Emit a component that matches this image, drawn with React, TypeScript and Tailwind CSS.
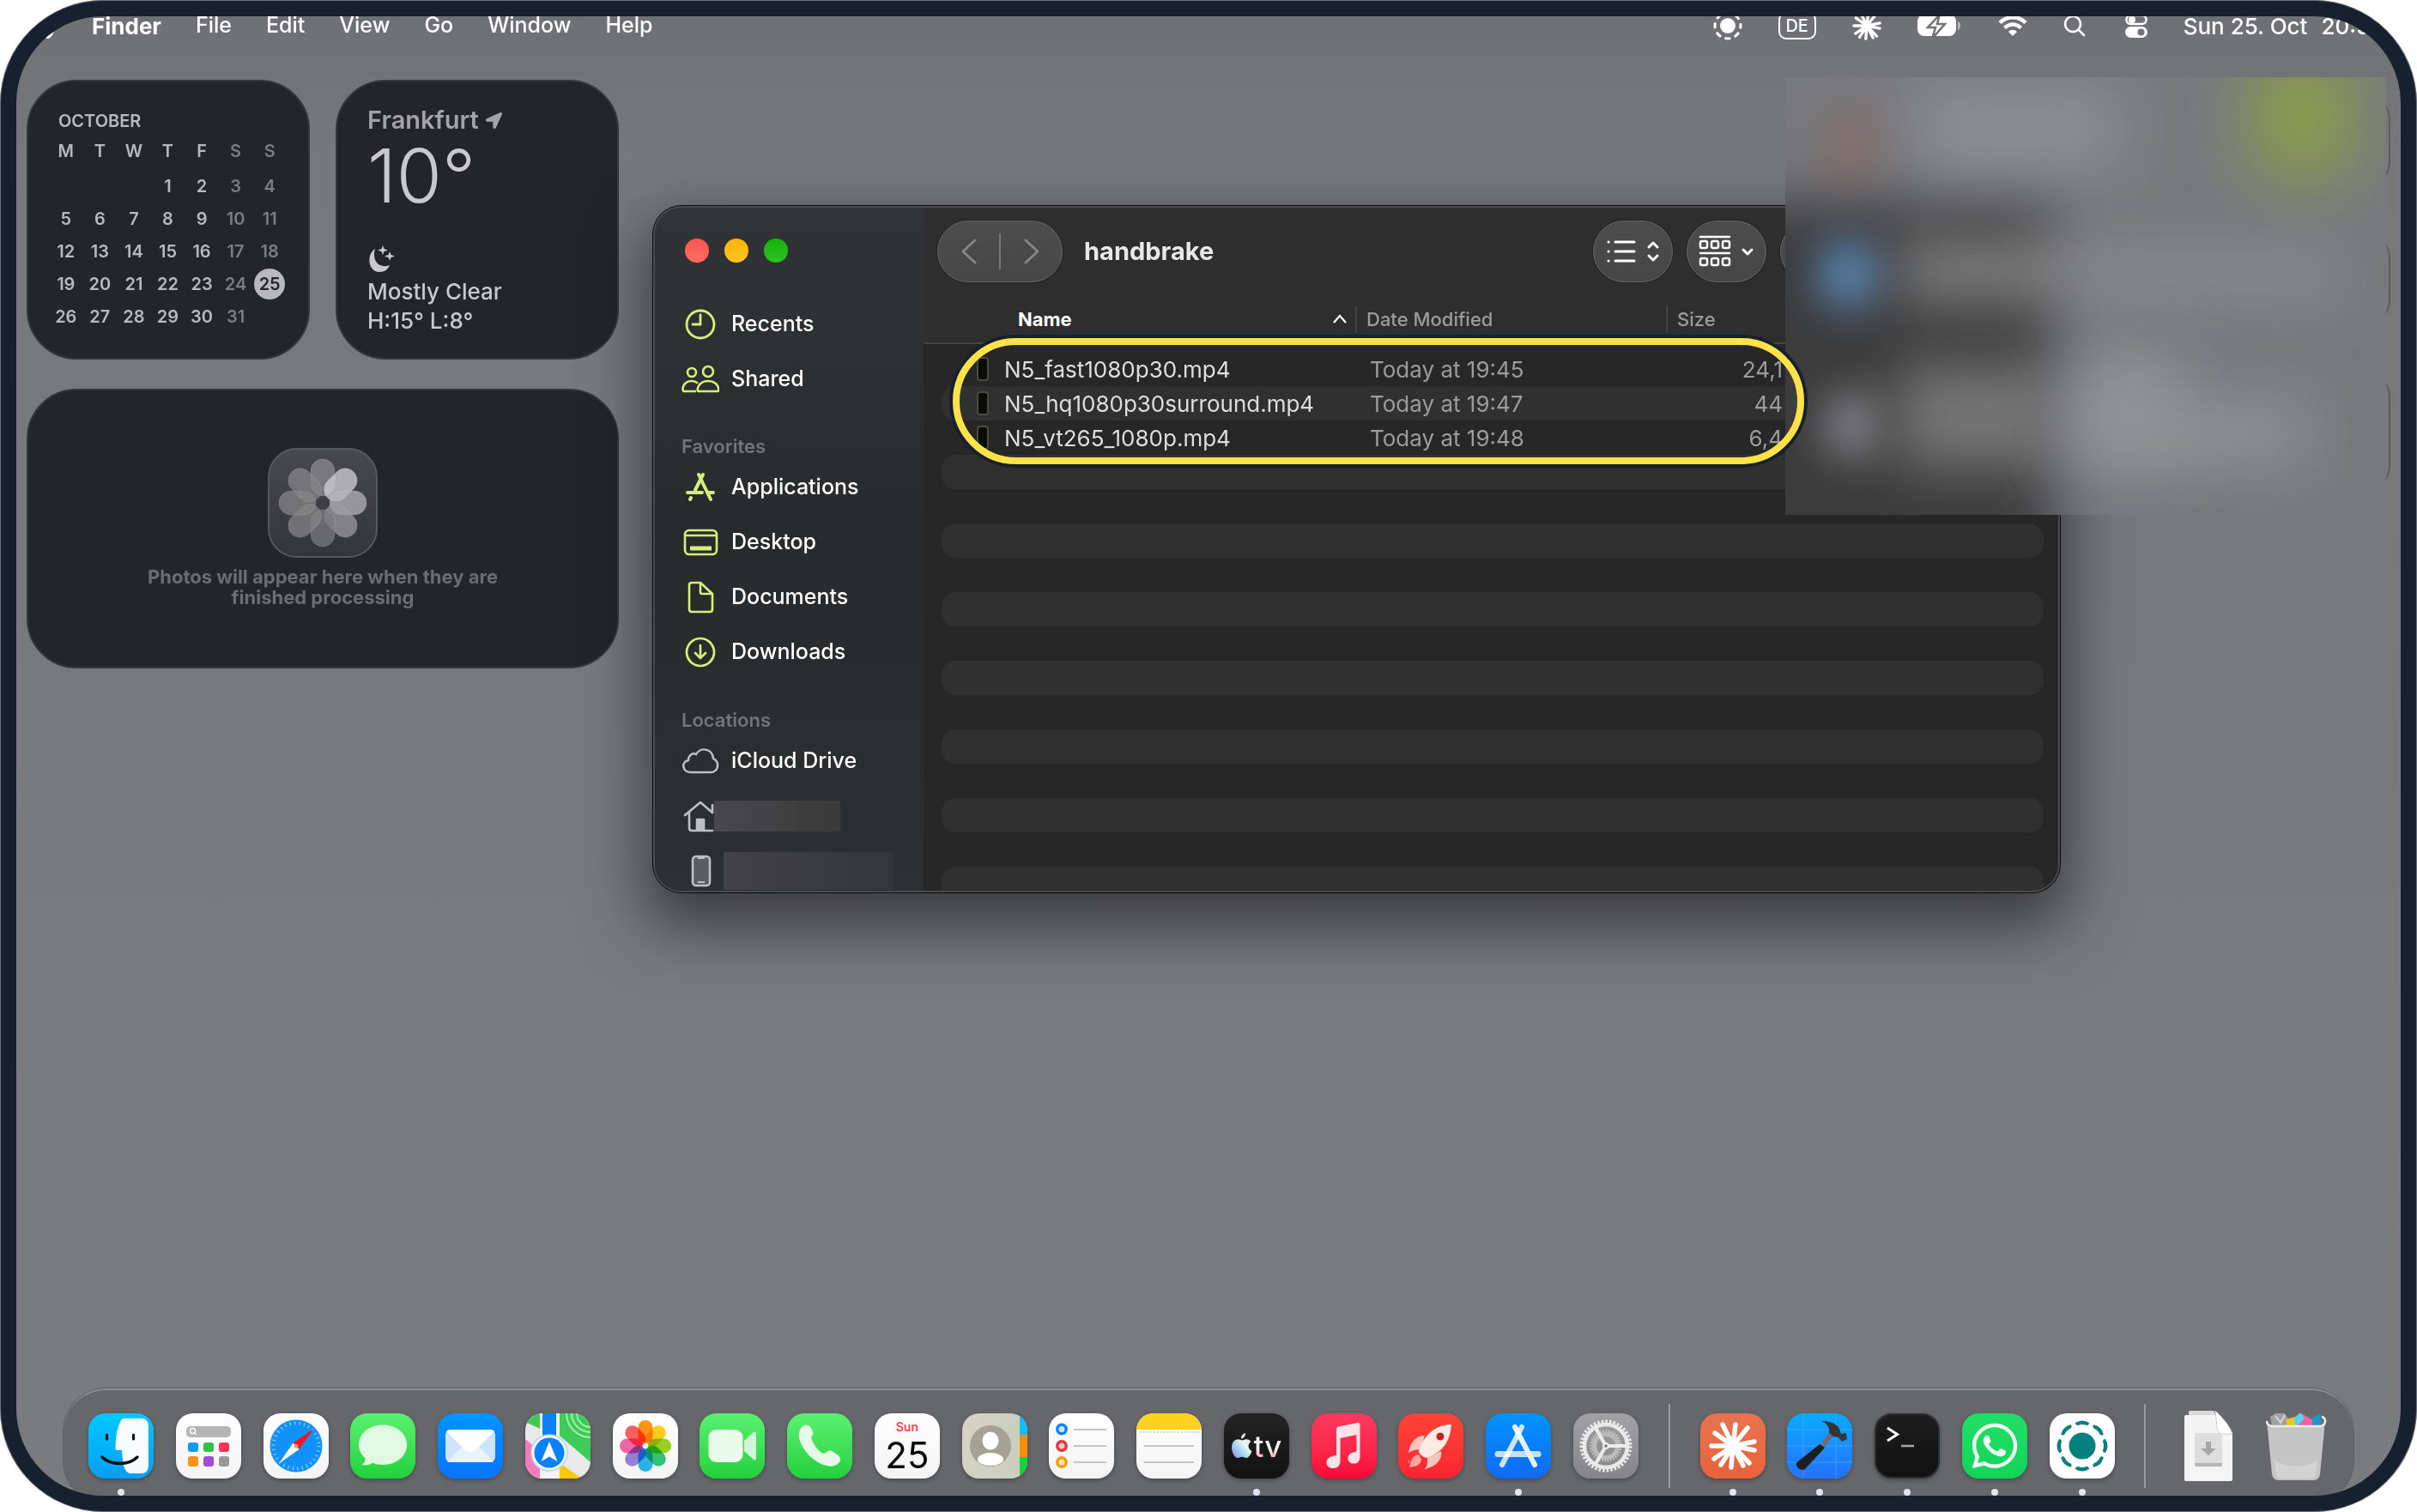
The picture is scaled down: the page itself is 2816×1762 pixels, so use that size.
import React from 'react';
import { FaApple, FaWhatsapp, FaLocationArrow } from 'react-icons/fa';

const menus = ['File', 'Edit', 'View', 'Go', 'Window', 'Help'];

const spin = (count: number) => Array.from({ length: count }, (_, i) => (360 / count) * i);

const Burst = ({ className }: { className: string }) => (
  <svg viewBox="0 0 76 76" className={className} stroke="currentColor" strokeWidth="5.5" strokeLinecap="round">
    <path d="M38 38 26 13M38 38 41 13M38 38 55 17M38 38 63 33M38 38 63 43M38 38 57 58M38 38 50 61M38 38 36 63M38 38 24 60M38 38 16 53M38 38 13 38M38 38 17 23" />
  </svg>
);

const MenuBar = () => (
  <header className="flex h-[60px] items-center justify-between pr-[44px] pl-[34px] text-[25px] text-white">
    <nav className="flex items-center gap-[40px]">
      <button aria-label="Apple menu">
        <FaApple className="size-[33px]" />
      </button>
      <button className="text-[26px] font-bold">Finder</button>
      {menus.map((menu) => (
        <button key={menu} className="font-medium">{menu}</button>
      ))}
    </nav>
    <div className="flex items-center gap-[42px] text-[26px] font-medium">
      <svg viewBox="0 0 34 34" className="size-[34px]" fill="none" stroke="white" strokeWidth="3">
        <circle cx="17" cy="17" r="9" fill="white" stroke="none" />
        <circle cx="17" cy="17" r="15" strokeDasharray="7 4.78" strokeDashoffset="3.5" />
      </svg>
      <span className="flex h-[32px] w-[44px] items-center justify-center rounded-[9px] border-2 border-white text-[20px]">DE</span>
      <Burst className="size-[46px] -mx-[6px]" />
      <svg viewBox="0 0 52 28" className="h-[28px] w-[52px]">
        <rect x="0" y="1" width="45" height="25" rx="8" fill="white" />
        <path d="M47 9c4 1 4 9 0 10z" fill="white" opacity=".5" />
        <path d="M27 0 12 16h9l-4 13 15-17h-9l3-12z" fill="white" stroke="#717276" strokeWidth="2.500" />
      </svg>
      <svg viewBox="0 0 34 26" className="h-[26px] w-[34px]" fill="none" stroke="white" strokeWidth="4.5">
        <path d="M2 9.500C10 1 24 1 32 9.500M7.500 15.500c5.500-5.500 13.500-5.500 19 0" />
        <path d="M12 20c3-3 7-3 10 0l-5 5z" fill="white" stroke="none" />
      </svg>
      <svg viewBox="0 0 26 26" className="mr-[4px] size-[26px]" fill="none" stroke="white" strokeWidth="2.6" strokeLinecap="round">
        <circle cx="11" cy="11" r="9" />
        <path d="m18 18 6 6" />
      </svg>
      <svg viewBox="0 0 26 28" className="h-[28px] w-[26px]">
        <rect x="1.500" y="2" width="23" height="10" rx="5" fill="none" stroke="white" strokeWidth="2.500" />
        <circle cx="8" cy="7" r="4" fill="white" />
        <rect x="0" y="15" width="26" height="13" rx="6.500" fill="white" />
        <circle cx="18.500" cy="21.500" r="4" fill="#717276" />
      </svg>
      <time className="flex gap-[16px]">
        <span>Sun 25. Oct</span>
        <span>20:51</span>
      </time>
    </div>
  </header>
);

const weeks = [
  ['', '', '', '1', '2', '3', '4'],
  ['5', '6', '7', '8', '9', '10', '11'],
  ['12', '13', '14', '15', '16', '17', '18'],
  ['19', '20', '21', '22', '23', '24', '25'],
  ['26', '27', '28', '29', '30', '31', ''],
];

const CalendarWidget = () => (
  <section className="h-[326px] rounded-[58px] border-2 border-[#36373a] bg-[#242529] pt-[33px] pr-[25px] pl-[24px] text-[20px] font-semibold text-[#b9b9bc]">
    <h2 className="pl-[11px] leading-[26px]">OCTOBER</h2>
    <table className="w-full table-fixed text-center">
      <thead>
        <tr className="h-[44px]">
          {['M', 'T', 'W', 'T', 'F', 'S', 'S'].map((d, i) => (
            <th key={i} className={i > 4 ? 'font-semibold text-[#7d7d80]' : 'font-semibold'}>{d}</th>
          ))}
        </tr>
      </thead>
      <tbody>
        {weeks.map((week, w) => (
          <tr key={w} className="h-[38px]">
            {week.map((day, i) => (
              <td key={i} className={i > 4 ? 'p-0 text-[#7d7d80]' : 'p-0'}>
                {day === '25' ? (
                  <span className="mx-auto flex size-[36px] items-center justify-center rounded-full bg-[#b9b9bb] text-[#242529]">25</span>
                ) : (
                  day
                )}
              </td>
            ))}
          </tr>
        ))}
      </tbody>
    </table>
  </section>
);

const WeatherWidget = () => (
  <section className="flex h-[326px] flex-col rounded-[58px] border-2 border-[#36373a] bg-[#242529] pt-[28px] pl-[35px] text-[#c9c9cb]">
    <h2 className="flex items-center gap-[8px] text-[29px] leading-[34px] font-semibold text-[#a3a3a6]">
      Frankfurt <FaLocationArrow className="size-[19px]" />
    </h2>
    <p className="text-[86px] leading-[97px] font-light">10°</p>
    <svg viewBox="0 0 32 32" className="mt-[32px] size-[32px]" fill="currentColor">
      <path d="M9 4C-1 10 0 30 14 31c6 0 10-3 12-8C13 28 5 17 9 4z" />
      <path d="m18 0 1.500 4L24 5.500 19.500 7 18 11l-1.500-4L12 5.500 16.500 4zM26 7l1.500 4 4.500 1.500-4.500 1.500L26 18l-1.500-4-4.500-1.500 4.500-1.500z" />
    </svg>
    <p className="mt-[5px] text-[26px] leading-[34px] font-medium">Mostly Clear</p>
    <p className="text-[26px] leading-[34px] font-medium">H:15° L:8°</p>
  </section>
);

const grayPetals = ['#8b8b8d', '#d2d2d4', '#b4b4b6', '#9b9b9d', '#7a7a7c', '#858587', '#858587', '#858587'];

const PhotosWidget = () => (
  <section className="col-span-2 flex h-[326px] flex-col items-center rounded-[58px] border-2 border-[#36373a] bg-[#242529] pt-[67px]">
    <div className="flex size-[128px] items-center justify-center rounded-[34px] border-2 border-[#58595c] bg-linear-to-b from-[#48494b] to-[#343538]">
      <svg viewBox="0 0 104 104" className="size-[104px]">
        {grayPetals.map((color, i) => (
          <rect key={i} x="38" y="1" width="28" height="43" rx="14" fill={color} fillOpacity=".75" stroke="#ffffff" strokeOpacity=".12" transform={`rotate(${i * 45} 52 52)`} />
        ))}
      </svg>
    </div>
    <p className="mt-[10px] w-[440px] text-center text-[22px] leading-[24px] font-bold text-[#6c6d70]">
      Photos will appear here when they are finished processing
    </p>
  </section>
);

const Clock = () => (
  <svg viewBox="0 0 44 40" className="h-[40px] w-[44px]" fill="none" stroke="currentColor" strokeWidth="2.800">
    <circle cx="22" cy="20" r="16" />
    <path d="M22 9v11h-9" strokeLinecap="round" />
  </svg>
);

const People = () => (
  <svg viewBox="0 0 44 40" className="h-[40px] w-[44px]" fill="none" stroke="currentColor" strokeWidth="2.600">
    <circle cx="12" cy="12" r="5" />
    <circle cx="31" cy="11" r="6" />
    <path d="M17 34H3c-3 0-2-12 9-12 3 0 5 1 7 2.500M20 34c-3 0-1-12 11-12s14 12 11 12z" />
  </svg>
);

const Apps = () => (
  <svg viewBox="0 0 44 40" className="h-[40px] w-[44px]" fill="none" stroke="currentColor" strokeWidth="4" strokeLinecap="round">
    <path d="m25 5-9 18M20 5l14 29M7 26h17M32 26h5M11 32l-1 2" />
  </svg>
);

const Desktop = () => (
  <svg viewBox="0 0 44 40" className="h-[40px] w-[44px]" fill="none" stroke="currentColor" strokeWidth="2.600">
    <rect x="4" y="6" width="37" height="28" rx="5" />
    <path d="M4 12h37" />
    <path d="M10 27h25" strokeWidth="5" />
  </svg>
);

const Doc = () => (
  <svg viewBox="0 0 44 40" className="h-[40px] w-[44px]" fill="none" stroke="currentColor" strokeWidth="2.600" strokeLinejoin="round">
    <path d="M12 3h10l14 13v18q0 3-3 3H12q-3 0-3-3V6q0-3 3-3z" />
    <path d="M22 3v11q0 2 2 2h11" />
  </svg>
);

const Download = () => (
  <svg viewBox="0 0 44 40" className="h-[40px] w-[44px]" fill="none" stroke="currentColor" strokeWidth="2.700" strokeLinecap="round" strokeLinejoin="round">
    <circle cx="22" cy="20" r="16" />
    <path d="M22 12v15m-6-6 6 6 6-6" />
  </svg>
);

const Cloud = () => (
  <svg viewBox="0 0 44 40" className="h-[40px] w-[44px]" fill="none" stroke="#c0c0c2" strokeWidth="2.500">
    <path d="M11 33C1 33-1 21 8 19c0-6 5-9 9-7 5-9 19-7 20 5 8 4 6 16-3 16z" />
  </svg>
);

const House = () => (
  <svg viewBox="0 0 44 40" className="h-[40px] w-[44px]" fill="none" stroke="#c0c0c2" strokeWidth="2.600" strokeLinecap="round" strokeLinejoin="round">
    <path d="M4 19 22 4l14 12V7M9 16v18q0 3 3 3h24" />
    <path d="M18 24h8v12h-8z" fill="#c0c0c2" />
  </svg>
);

const Phone = () => (
  <svg viewBox="0 0 44 40" className="h-[40px] w-[44px]" fill="#5c5d5f" stroke="#c0c0c2" strokeWidth="2.600">
    <rect x="13" y="3" width="20" height="34" rx="4" />
    <path d="M19 5h8M19 33h8" strokeWidth="2" />
  </svg>
);

const SideLink = ({ icon, label }: { icon: React.ReactNode; label: string }) => (
  <li>
    <a href="#" className="flex h-[64px] items-center gap-[14px] text-[#d3f07d]">
      {icon}
      <span className="text-[25px] font-medium text-white">{label}</span>
    </a>
  </li>
);

const Sidebar = () => (
  <aside className="flex w-[315px] shrink-0 flex-col overflow-hidden bg-linear-to-b from-[#323336] via-[#292a2b] to-[#2e2f31] pl-[33px]">
    <div className="mt-[38px] flex gap-[18px] pl-[4px]">
      <button aria-label="Close" className="size-[28px] rounded-full bg-linear-to-b from-[#f9544c] to-[#fb6e66]" />
      <button aria-label="Minimize" className="size-[28px] rounded-full bg-linear-to-b from-[#fdb400] to-[#fdc421]" />
      <button aria-label="Zoom" className="size-[28px] rounded-full bg-linear-to-b from-[#0fb504] to-[#2fc024]" />
    </div>
    <ul className="mt-[40px]">
      <SideLink icon={<Clock />} label="Recents" />
      <SideLink icon={<People />} label="Shared" />
    </ul>
    <h3 className="mt-[30px] h-[34px] text-[22px] leading-[32px] font-semibold text-[#747577]">Favorites</h3>
    <ul>
      <SideLink icon={<Apps />} label="Applications" />
      <SideLink icon={<Desktop />} label="Desktop" />
      <SideLink icon={<Doc />} label="Documents" />
      <SideLink icon={<Download />} label="Downloads" />
    </ul>
    <h3 className="mt-[31px] h-[34px] text-[22px] leading-[32px] font-semibold text-[#747577]">Locations</h3>
    <ul>
      <SideLink icon={<Cloud />} label="iCloud Drive" />
      <li className="flex h-[64px] items-center">
        <House />
        <span className="-ml-[6px] h-[36px] w-[147px] bg-linear-to-r from-[#48484a] to-[#3a3a3b]" />
      </li>
      <li className="flex h-[64px] items-center gap-[5px]">
        <Phone />
        <span className="h-[44px] w-[197px] bg-linear-to-r from-[#434346] to-[#343537]" />
      </li>
    </ul>
  </aside>
);

const files = [
  { name: 'N5_fast1080p30.mp4', date: 'Today at 19:45', size: '24,1' },
  { name: 'N5_hq1080p30surround.mp4', date: 'Today at 19:47', size: '44' },
  { name: 'N5_vt265_1080p.mp4', date: 'Today at 19:48', size: '6,4' },
];

const rows = Array.from({ length: 16 }, (_, i) => files[i] ?? null);

const pill = 'flex h-[72px] items-center justify-center rounded-full border border-[#676767] bg-linear-to-b from-[#4c4c4c] to-[#464646] text-white ring-1 ring-[#222]';

const Toolbar = () => (
  <div className="flex h-[106px] shrink-0 items-center pr-[36px] pl-[16px]">
    <div className={`${pill} w-[146px]`}>
      <button aria-label="Back" className="flex flex-1 justify-center border-r-2 border-[#777] py-[6px]">
        <svg viewBox="0 0 18 30" className="h-[30px] w-[18px]" fill="none" stroke="#858585" strokeWidth="3" strokeLinecap="round" strokeLinejoin="round">
          <path d="M16 2 2 15l14 13" />
        </svg>
      </button>
      <button aria-label="Forward" className="flex flex-1 justify-center py-[6px]">
        <svg viewBox="0 0 18 30" className="h-[30px] w-[18px]" fill="none" stroke="#858585" strokeWidth="3" strokeLinecap="round" strokeLinejoin="round">
          <path d="m2 2 14 13L2 28" />
        </svg>
      </button>
    </div>
    <h1 className="ml-[25px] w-[593px] text-[29px] font-bold text-[#e8e8e8]">handbrake</h1>
    <div className="flex gap-[16px]">
      <button aria-label="View as list" className={`${pill} w-[93px]`}>
        <svg viewBox="0 0 64 36" className="h-[36px] w-[64px]" fill="none" stroke="currentColor" strokeWidth="3" strokeLinecap="round" strokeLinejoin="round">
          <path d="M11 7h22M11 18h22M11 29h22M3 7h.1M3 18h.1M3 29h.1" />
          <path d="m50 13 5-5 5 5M50 23l5 5 5-5" />
        </svg>
      </button>
      <button aria-label="Group" className={`${pill} w-[93px]`}>
        <svg viewBox="0 0 66 40" className="h-[40px] w-[66px]" fill="none" stroke="currentColor" strokeWidth="2.500" strokeLinecap="round" strokeLinejoin="round">
          <path d="M2 3h34M2 22h34" />
          <rect x="2" y="8" width="8" height="8" rx="2" />
          <rect x="15" y="8" width="8" height="8" rx="2" />
          <rect x="28" y="8" width="8" height="8" rx="2" />
          <rect x="2" y="28" width="8" height="8" rx="2" />
          <rect x="15" y="28" width="8" height="8" rx="2" />
          <rect x="28" y="28" width="8" height="8" rx="2" />
          <path d="m52 18 5 5 5-5" strokeWidth="3" />
        </svg>
      </button>
      <button aria-label="Share" className={`${pill} w-[93px]`} />
    </div>
  </div>
);

const FileList = () => (
  <table className="w-full table-fixed text-left text-[26px] text-[#9c9c9c]">
    <colgroup>
      <col className="w-[21px]" />
      <col className="w-[484px]" />
      <col className="w-[362px]" />
      <col className="w-[134px]" />
      <col />
      <col className="w-[19px]" />
    </colgroup>
    <thead className="border-b-2 border-[#454545] bg-[#2e2e2e] text-[22px]">
      <tr className="h-[54px] align-top">
        <th />
        <th className="p-0 pt-[10px]">
          <button className="flex h-[32px] w-full items-center justify-between border-r-2 border-[#444] pr-[10px] pl-[89px] font-bold text-white">
            Name
            <svg viewBox="0 0 16 12" className="h-[12px] w-[16px]" fill="none" stroke="currentColor" strokeWidth="2.200">
              <path d="m1 10 7-8 7 8" />
            </svg>
          </button>
        </th>
        <th className="p-0 pt-[10px]">
          <button className="flex h-[32px] w-full items-center border-r-2 border-[#444] pl-[11px] font-medium">Date Modified</button>
        </th>
        <th className="p-0 pt-[10px]">
          <button className="flex h-[32px] items-center pl-[11px] font-medium">Size</button>
        </th>
        <th />
        <th />
      </tr>
    </thead>
    <tbody>
      <tr className="h-[10px]"><td colSpan={6} className="p-0" /></tr>
      {rows.map((file, i) => {
        const cell = i % 2 ? 'bg-[#303030] p-0' : 'p-0';
        return (
          <tr key={i} className="h-[40px]">
            <td className="p-0" />
            <td className={`${cell} rounded-l-[16px]`}>
              {file && (
                <span className="flex items-center gap-[18px] pl-[41px] text-[#dedede]">
                  <span className="h-[28px] w-[14px] rounded-[4px] border-2 border-[#4a4b45] bg-[#0b0c07]" />
                  {file.name}
                </span>
              )}
            </td>
            <td className={`${cell} pl-[15px]`}>{file?.date}</td>
            <td className={`${cell} text-right`}>{file?.size}</td>
            <td className={`${cell} rounded-r-[16px]`} />
            <td className="p-0" />
          </tr>
        );
      })}
    </tbody>
  </table>
);

const FinderWindow = () => (
  <main className="absolute top-[239px] left-[760px] flex h-[802px] w-[1641px] overflow-hidden rounded-[34px] border border-[#0c0c0c] bg-[#272727] shadow-[0_30px_70px_10px_rgba(0,0,0,0.5)]">
    <Sidebar />
    <div className="flex min-w-0 flex-1 flex-col overflow-hidden">
      <div className="bg-[#2e2e2e]"><Toolbar /></div>
      <FileList />
    </div>
    <div className="pointer-events-none absolute inset-0 rounded-[33px] border-2 border-[#4a4b4c]" />
  </main>
);

const Notifications = () => (
  <>
    <div className="absolute top-[111px] right-[31px] h-[106px] w-[60px] rounded-r-[28px] border-r-2 border-[#5c5d60]" />
    <div className="absolute top-[272px] right-[31px] h-[106px] w-[60px] rounded-r-[28px] border-r-2 border-[#5c5d60]" />
    <div className="absolute top-[434px] right-[31px] h-[137px] w-[60px] rounded-r-[28px] border-r-2 border-[#5c5d60]" />
    <div className="absolute top-[90px] left-[2080px] h-[510px] w-[700px] overflow-hidden bg-[#78797d]">
      <div className="absolute top-[145px] -left-[80px] h-[480px] w-[390px] bg-[#3c3c3d] blur-[34px]" />
      <div className="absolute top-[10px] left-[150px] h-[100px] w-[240px] bg-[#8e8f93] blur-[38px]" />
      <div className="absolute top-[40px] left-[45px] h-[80px] w-[60px] rounded-full bg-[#8f6559] opacity-60 blur-[26px]" />
      <div className="absolute -top-[30px] left-[540px] h-[150px] w-[126px] rounded-[30px] bg-[#8da344] opacity-80 blur-[36px]" />
      <div className="absolute top-[185px] left-[130px] h-[80px] w-[220px] bg-[#8a8a8a] opacity-80 blur-[32px]" />
      <div className="absolute top-[200px] left-[340px] h-[60px] w-[300px] bg-[#88898d] blur-[30px]" />
      <div className="absolute top-[190px] left-[38px] h-[80px] w-[70px] rounded-[30px] bg-[#5f8fc0] opacity-85 blur-[24px]" />
      <div className="absolute top-[368px] left-[46px] h-[76px] w-[62px] rounded-[24px] bg-[#929295] opacity-80 blur-[24px]" />
      <div className="absolute top-[335px] left-[130px] h-[120px] w-[190px] bg-[#848484] opacity-80 blur-[32px]" />
      <div className="absolute top-[320px] left-[340px] h-[120px] w-[120px] bg-[#939498] blur-[38px]" />
      <div className="absolute top-[380px] left-[340px] h-[70px] w-[270px] bg-[#919296] blur-[36px]" />
    </div>
  </>
);

type TileProps = { name: string; tone: string; running?: boolean; children?: React.ReactNode };

// every dock icon is drawn on the same 76 unit grid
const Tile = ({ name, tone, running, children }: TileProps) => (
  <button aria-label={name} className="flex h-[96px] w-[76px] flex-col items-center justify-between">
    <span className={`block size-[76px] overflow-hidden rounded-[20px] shadow-[0_2px_5px_rgba(0,0,0,0.3)] ${tone}`}>{children}</span>
    {running && <span className="size-[8px] rounded-full bg-[#e4e4ee]" />}
  </button>
);

const Art = ({ children }: { children: React.ReactNode }) => (
  <svg viewBox="0 0 76 76" className="size-[76px]" fill="none">{children}</svg>
);

const petals = ['#ff8a00', '#ffcc00', '#8fd10a', '#1fc469', '#12b2ee', '#8d78d8', '#f5589f', '#fc4d52'];

const Separator = () => (
  <div className="-mt-[11px] flex h-[98px] w-[20px] justify-center">
    <span className="w-[2px] bg-[#98999b]" />
  </div>
);

const green = 'bg-linear-to-b from-[#59f170] to-[#1fd13c]';
const paper = 'bg-linear-to-b from-white to-[#f3f3f4]';

const Dock = () => (
  <footer className="mr-[74px] ml-[74px] mt-auto mb-[10px] flex h-[134px] items-start justify-between rounded-[50px] border-t-2 border-[#8e8f92] bg-[#66676b] px-[29px] pt-[27px] shadow-[0_0_0_1px_#606165]">
    <Tile name="Finder" tone="bg-linear-to-b from-[#00c9ff] to-[#0a9df4]" running>
      <Art>
        <path d="M40 6h21q9 0 9 9v46q0 9-9 9H48c-8-3-8-16-9-27h-5c-2 0-3-1-2.500-4C32 26 34 12 40 6z" fill="#f6fbff" />
        <path d="M21.500 25v5M52.500 25v5" stroke="#111" strokeWidth="3.200" strokeLinecap="round" />
        <path d="M16 51c10 10 31 10 41 0" stroke="#0c0c0c" strokeWidth="3.400" strokeLinecap="round" />
      </Art>
    </Tile>
    <Tile name="Apps" tone={paper}>
      <Art>
        <rect x="12" y="15" width="52" height="13" rx="5" fill="#b4b5b4" />
        <circle cx="19.500" cy="20.500" r="3" stroke="white" strokeWidth="1.300" />
        <path d="m22 23 2 2" stroke="white" strokeWidth="1.300" />
        <rect x="14" y="34" width="12" height="11" rx="3" fill="#0a9dff" />
        <rect x="32" y="34" width="12" height="11" rx="3" fill="#2dc148" />
        <rect x="50" y="34" width="12" height="11" rx="3" fill="#fb2f5b" />
        <rect x="14" y="50" width="12" height="12" rx="3" fill="#fb931b" />
        <rect x="32" y="50" width="12" height="12" rx="3" fill="#a14ed6" />
        <rect x="50" y="50" width="12" height="12" rx="3" fill="#989898" />
      </Art>
    </Tile>
    <Tile name="Safari" tone={paper}>
      <Art>
        <circle cx="38" cy="38" r="30.500" fill="#1391fa" />
        <circle cx="38" cy="38" r="26.500" stroke="#8fd2ff" strokeWidth="4" strokeDasharray="1.200 4.350" />
        <path d="M58.500 18 41.500 42 34.500 34.500z" fill="#f9131d" />
        <path d="m18 58.500 16.500-24 7 7.500z" fill="#fff" />
        <circle cx="38" cy="38" r="2.500" fill="#f78a8a" />
      </Art>
    </Tile>
    <Tile name="Messages" tone={green}>
      <Art>
        <path d="M38 13.500c16 0 28 10 28 23.300S54 60 38 60c-4.500 0-8.500-.8-12-2.200-3 2.200-7 3.200-12.500 2.200 3-2 4-4 4.200-7.200C13 48.500 10 43 10 36.800 10 23.500 22 13.500 38 13.500z" fill="#e0fae2" />
      </Art>
    </Tile>
    <Tile name="Mail" tone="bg-linear-to-b from-[#0396ff] to-[#0774fb]">
      <Art>
        <rect x="9" y="19" width="58" height="38" rx="6" fill="#cfe3fa" />
        <path d="m11 56 20-20h14l20 20q-1 1-4 1H15q-3 0-4-1z" fill="#e9f3fd" />
        <path d="M10 21q2-2 5-2h46q3 0 5 2L44 43q-6 5-12 0z" fill="white" />
      </Art>
    </Tile>
    <Tile name="Maps" tone="bg-[#e9e9ea]">
      <Art>
        <path d="M0 0h17v18L0 10z" fill="#3ecb57" />
        <path d="M40 0h36v57L40 26z" fill="#3ecb57" />
        <g stroke="#a4ecab" strokeWidth="2">
          <circle cx="76" cy="0" r="28" />
          <circle cx="76" cy="0" r="22" />
          <circle cx="76" cy="0" r="16" />
        </g>
        <path d="M0 30 17 44v32H0z" fill="#f57cbb" />
        <path d="M40 58 66 76H40z" fill="#fdc70a" />
        <path d="M17 0h22v76H17z" fill="#f4f4f5" />
        <path d="M20 0h16v34H20z" fill="#0a80fb" />
        <circle cx="28" cy="46" r="21" fill="#f3f8fe" stroke="#b7d6f4" strokeWidth="1.500" />
        <circle cx="28" cy="46" r="17.500" fill="#0a80fb" />
        <path d="m28 33 9.500 23-9.500-5.500L18.500 56z" fill="white" />
      </Art>
    </Tile>
    <Tile name="Photos" tone={paper}>
      <Art>
        {petals.map((color, i) => (
          <rect key={color} x="29.500" y="8" width="17" height="27" rx="8.500" fill={color} fillOpacity=".9" className="mix-blend-multiply" transform={`rotate(${i * 45} 38 38)`} />
        ))}
      </Art>
    </Tile>
    <Tile name="FaceTime" tone={green}>
      <Art>
        <rect x="10.500" y="19" width="40" height="38" rx="9" fill="#eafbeb" />
        <path d="M52 32 63 22q3-2 3 2v28q0 4-3 2L52 44z" fill="#d3f6d8" />
      </Art>
    </Tile>
    <Tile name="Phone" tone={green}>
      <Art>
        <path d="M20 14c-5 2-8 10-5 18 4 12 17 26 31 29 8 2 14-1 16-6 1-4-2-6-8-10-4-3-6-2-9 1-2 1-3 1-5 0-5-4-9-10-11-15-1-2-1-4 1-6 1-2 0-5-3-9-2-3-5-3-7-2z" fill="#e4fae7" />
      </Art>
    </Tile>
    <Tile name="Calendar" tone={paper}>
      <span className="flex flex-col items-center pt-[8px]">
        <span className="text-[14px] leading-[16px] font-semibold text-[#fb3b41]">Sun</span>
        <span className="text-[42px] leading-[50px] text-black">25</span>
      </span>
    </Tile>
    <Tile name="Contacts" tone="bg-linear-to-r from-[#d5d3c6] to-[#c9cdbd]">
      <Art>
        <circle cx="33" cy="38" r="24" fill="#a5a294" />
        <ellipse cx="33" cy="32" rx="9.500" ry="10.500" fill="white" />
        <ellipse cx="33" cy="53.500" rx="15" ry="7.500" fill="white" />
        <path d="M67 0h9v25h-9z" fill="#0cc0fb" />
        <path d="M67 25h9v26h-9z" fill="#fb8c05" />
        <path d="M67 51h9v25h-9z" fill="#0fd43c" />
      </Art>
    </Tile>
    <Tile name="Reminders" tone={paper}>
      <Art>
        <circle cx="15" cy="18.500" r="5.200" fill="#cfe6ff" stroke="#0a84ff" strokeWidth="3.400" />
        <circle cx="15" cy="38" r="5.200" fill="#f9c6c8" stroke="#e6343c" strokeWidth="3.400" />
        <circle cx="15" cy="57" r="5.200" fill="#fde0b0" stroke="#f69a12" strokeWidth="3.400" />
        <path d="M29 19h38M29 38h38M29 57h38" stroke="#c4c4c6" strokeWidth="2" />
      </Art>
    </Tile>
    <Tile name="Notes" tone={paper}>
      <Art>
        <path d="M0 0h76v19H0z" fill="#ffd21f" />
        <path d="M4 22h70" stroke="#b9b9b9" strokeWidth="1.500" strokeDasharray="1.500 2.500" />
        <path d="M9 38h58M9 57h58" stroke="#c4c4c6" strokeWidth="2" />
      </Art>
    </Tile>
    <Tile name="TV" tone="bg-linear-to-b from-[#232324] to-[#121213]" running>
      <span className="flex h-[76px] items-center justify-center gap-[2px]">
        <svg viewBox="0 0 24 30" className="h-[30px] w-[24px]">
          <defs>
            <linearGradient id="tv-apple" x1="0" y1="1" x2="1" y2="0">
              <stop offset="0" stopColor="#a479ee" />
              <stop offset=".35" stopColor="#9fd9ef" />
              <stop offset=".6" stopColor="#f1f1f1" />
              <stop offset="1" stopColor="#dcdcdc" />
            </linearGradient>
          </defs>
          <path fill="url(#tv-apple)" d="M16 0c.4 3-2.300 6.500-5 6.500C10.800 3.500 13 .7 16 0zM12 8.500c1.500 0 3-1.500 5.500-1.300 2.300.2 4 1.200 5 2.800-4.500 3-3.500 9 1 11-1 3-3.500 8-6.500 8-2 0-2.600-1.200-5-1.200S9 29 7 29C3.500 29 0 22.500 0 17c0-6 3.500-9.700 7.500-9.700 2 0 3.300 1.200 4.500 1.200z" />
        </svg>
        <span className="bg-linear-to-b from-[#f4f4f4] from-55% to-[#ee8f8f] bg-clip-text text-[35px] leading-[40px] font-medium text-transparent">tv</span>
      </span>
    </Tile>
    <Tile name="Music" tone="bg-linear-to-b from-[#fb3a5e] to-[#fb0537]">
      <Art>
        <path d="M29 18q0-2 2-2.500L54 11q2.500-.5 2.500 2v38c0 5-3 7.500-7 7.500s-7-2-7-6c0-5 4-7 10-8V25l-19 4v27c0 5-3.500 8-8 8-5 0-8-2.500-8-6.500 0-5 4-7.500 11.500-8.500z" fill="#fde3e8" />
      </Art>
    </Tile>
    <Tile name="Rocket" tone="bg-linear-to-b from-[#fb4436] to-[#fb2430]">
      <Art>
        <path d="M31 26c-10 0-17 7-19 20 5-3 9-4 14-4zM50 44c2 9-5 18-19 21 4-6 3-8 3-13z" fill="#fcc3bd" />
        <path d="M24 48c-8 1-9 7-11 15 9-1 13-3 14-9zM12 54c2 1 1 3 0 5z" fill="#fba59e" />
        <path d="M62 13c-20 1-31 12-38 30-1 4 7 11 12 8 17-7 25-20 26-38z" fill="#fdeae7" />
        <circle cx="49" cy="27" r="4.500" fill="#c22420" />
      </Art>
    </Tile>
    <Tile name="App Store" tone="bg-linear-to-b from-[#0394fb] to-[#1169f3]" running>
      <Art>
        <path d="M14 47.500h47" stroke="#c5dffb" strokeWidth="7" strokeLinecap="round" />
        <path d="m34 16 23 44" stroke="#e5f1fd" strokeWidth="6" strokeLinecap="round" />
        <path d="M42 16 19 60" stroke="white" strokeOpacity=".8" strokeWidth="6" strokeLinecap="round" />
      </Art>
    </Tile>
    <Tile name="System Settings" tone="bg-linear-to-b from-[#a2a2a5] to-[#858587]">
      <Art>
        <circle cx="38" cy="38" r="28.500" stroke="#e9e9e9" strokeWidth="4" strokeDasharray="2.600 2" />
        <circle cx="38" cy="38" r="25" stroke="#e9e9e9" strokeWidth="4.500" />
        <circle cx="38" cy="38" r="17" stroke="#c4c4c4" strokeWidth="3" strokeDasharray="1.800 1.500" />
        <circle cx="38" cy="38" r="13.500" stroke="#bababa" strokeWidth="5" />
        <path d="M38 38h24M38 38 26 17M38 38 26 59" stroke="#ededed" strokeWidth="4" />
        <circle cx="38" cy="38" r="4" fill="#ededed" />
        <circle cx="38" cy="38" r="1.800" fill="#777" />
      </Art>
    </Tile>
    <Separator />
    <Tile name="Claude" tone="bg-linear-to-b from-[#e8734f] to-[#e9623a]" running>
      <Burst className="size-[76px] text-white" />
    </Tile>
    <Tile name="Xcode" tone="bg-linear-to-b from-[#06abff] to-[#2670fb]" running>
      <Art>
        <path d="M19 0v76M57 0v76M0 19h76M0 57h76M0 38h76" stroke="#5cb6ff" strokeOpacity=".5" />
        <path d="m53 22-13 18" stroke="#6c6e73" strokeWidth="6" />
        <path d="m38 36 6 4-23 25q-3 2-7-.5-4-3-3-7z" fill="#1d1e22" />
        <path d="M40 9c10 0 18 3 21 9l2 6 6-1 1 7-6 3-4-5-6-1-5-4c1-6-2-11-9-14z" fill="#33353a" />
      </Art>
    </Tile>
    <Tile name="Terminal" tone="border-2 border-[#2f2f30] bg-linear-to-b from-[#1e1e1f] to-[#111]" running>
      <svg viewBox="2 2 72 72" className="size-[72px]" fill="none">
        <path d="m15 17 11.500 7.500L15 32" stroke="white" strokeWidth="3" />
        <path d="M31 38h15" stroke="#a7a7a7" strokeWidth="2.500" />
      </svg>
    </Tile>
    <Tile name="WhatsApp" tone="bg-linear-to-b from-[#22de66] to-[#10d558]" running>
      <span className="flex h-[76px] items-center justify-center">
        <FaWhatsapp className="size-[60px] text-[#f1fcf4]" />
      </span>
    </Tile>
    <Tile name="Recorder" tone="bg-white" running>
      <Art>
        <circle cx="38" cy="38" r="15.500" fill="#078080" />
        {spin(8).map((angle) => (
          <path key={angle} d="M30 11q8-5 16 0 0 3-3 3-5-2-10 0-3 0-3-3z" fill="#078080" transform={`rotate(${angle} 38 38)`} />
        ))}
      </Art>
    </Tile>
    <Separator />
    <button aria-label="Downloads" className="-mt-[6px]">
      <svg viewBox="0 0 76 88" className="h-[88px] w-[76px]">
        <path d="M15 3h29l14 20v62H11V8h4z" fill="#d9d9d9" />
        <path d="M10 10q0-2 2-2h34l20 22v53q0 2-2 2H12q-2 0-2-2z" fill="#f4f4f4" />
        <path d="M46 3q2 24 4 26 7 2 16 1-4-12-20-27z" fill="white" stroke="#cfcfcf" />
        <rect x="22" y="29" width="32" height="39" rx="2" fill="#dedede" />
        <path d="M22 64h32v2q0 2-2 2H24q-2 0-2-2z" fill="#b5b5b5" />
        <path d="M35 39h6v8h6L38 55l-9-8h6z" fill="#a5a5a5" />
      </svg>
    </button>
    <button aria-label="Trash">
      <svg viewBox="0 0 76 80" className="h-[80px] w-[76px]">
        <ellipse cx="38" cy="9" rx="33" ry="7" fill="#6a6a6a" />
        <path d="m8 4 8-5h8l6 9-4 7H10z" fill="#a2a2a3" />
        <path d="m14 3 6 8 5-9" fill="none" stroke="#d9d9d9" strokeWidth="2" />
        <path d="m27 7 10-3 4 10-14 2z" fill="#f0c419" />
        <path d="m37 4 6-5 16 10-4 8H38z" fill="#f25fa4" />
        <path d="m35 7 8-8 5 7-9 9z" fill="#52d3f2" />
        <path d="m56 6 10-6 2 12-9 4z" fill="#1b96c8" />
        <path d="M4 9q0 5 6 6h56q6-1 6-6l-6 62q-1 7-8 7H18q-7 0-8-7z" fill="#c5c5c6" />
        <path d="m13 55 2 17q1 4 5 4h36q4 0 5-4l2-17q-25 14-50 0z" fill="#d3d3d4" />
        <path d="M4 9q0 5 6 6h56q6-1 6-6 0-4-4-5" fill="none" stroke="#ededed" strokeWidth="2.500" />
      </svg>
    </button>
  </footer>
);

const App = () => (
  <div className="relative flex h-screen w-full flex-col overflow-hidden rounded-[120px] bg-linear-to-b from-[#6e6f72] via-[#77787c] via-10% to-[#7a7b7f] font-['Inter','Liberation_Sans',sans-serif]">
    <MenuBar />
    <div className="ml-[31px] grid w-[690px] grid-cols-2 gap-x-[30px] gap-y-[34px] pt-[33px]">
      <CalendarWidget />
      <WeatherWidget />
      <PhotosWidget />
    </div>
    <FinderWindow />
    <Notifications />
    <div className="absolute top-[394px] left-[1110px] h-[147px] w-[992px] rounded-full border-8 border-[#fde24a] shadow-[0_0_0_4px_#17202e]" />
    <Dock />
    <div className="pointer-events-none absolute inset-0 rounded-[120px] border-2 border-[#6f737b]" />
    <div className="pointer-events-none absolute inset-[1px] rounded-[119px] border-[18px] border-[#17202e]" />
  </div>
);

export default App;
